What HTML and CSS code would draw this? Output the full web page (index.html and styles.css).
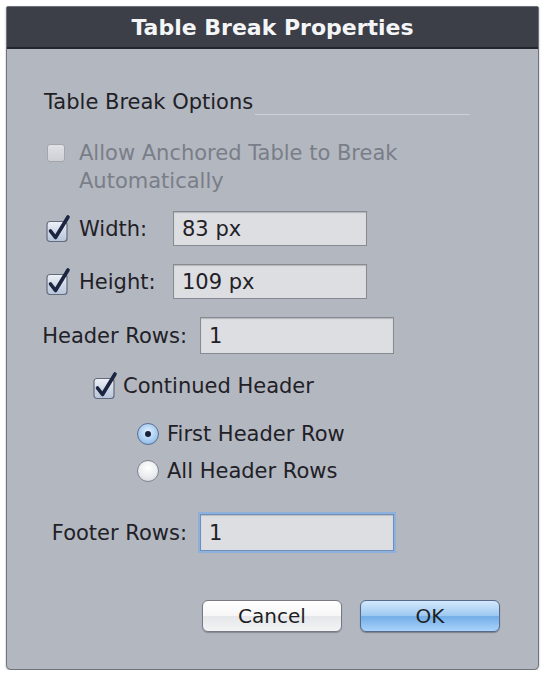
FILE: index.html
```html
<!DOCTYPE html>
<html>
<head>
<meta charset="utf-8">
<link rel="stylesheet" href="styles.css">
</head>
<body>
<div class="dialog">
  <div class="titlebar">Table Break Properties</div>
  <div class="content">
    <div class="row heading">
      <span>Table Break Options</span>
      <span class="rule"></span>
    </div>

    <div class="row allow">
      <span class="box disabled"></span>
      <span class="allow-text">Allow Anchored Table to Break<br>Automatically</span>
    </div>

    <div class="row dim">
      <svg class="check" width="26" height="28" viewBox="0 0 26 28">
        <defs>
          <linearGradient id="cb" x1="0" y1="0" x2="0" y2="1">
            <stop offset="0" stop-color="#eef1f7"/>
            <stop offset="1" stop-color="#b6c3d9"/>
          </linearGradient>
        </defs>
        <rect x="1" y="6.5" width="20" height="20" rx="3" fill="url(#cb)" stroke="#636a7a" stroke-width="1.2"/>
        <path d="M4.5 16 L9.5 22.5 L22 2" fill="none" stroke="#1b2440" stroke-width="3.6" stroke-linecap="round" stroke-linejoin="round"/>
      </svg>
      <span class="dim-label">Width:</span>
      <span class="field dim-field">83 px</span>
    </div>

    <div class="row dim second">
      <svg class="check" width="26" height="28" viewBox="0 0 26 28">
        <rect x="1" y="6.5" width="20" height="20" rx="3" fill="url(#cb)" stroke="#636a7a" stroke-width="1.2"/>
        <path d="M4.5 16 L9.5 22.5 L22 2" fill="none" stroke="#1b2440" stroke-width="3.6" stroke-linecap="round" stroke-linejoin="round"/>
      </svg>
      <span class="dim-label">Height:</span>
      <span class="field dim-field">109 px</span>
    </div>

    <div class="row labeled header-rows">
      <span class="rlabel">Header Rows:</span>
      <span class="field wide">1</span>
    </div>

    <div class="row continued">
      <svg class="check" width="26" height="28" viewBox="0 0 26 28">
        <rect x="1" y="6.5" width="20" height="20" rx="3" fill="url(#cb)" stroke="#636a7a" stroke-width="1.2"/>
        <path d="M4.5 16 L9.5 22.5 L22 2" fill="none" stroke="#1b2440" stroke-width="3.6" stroke-linecap="round" stroke-linejoin="round"/>
      </svg>
      <span>Continued Header</span>
    </div>

    <div class="row radio first">
      <span class="dot on"></span>
      <span>First Header Row</span>
    </div>
    <div class="row radio all">
      <span class="dot"></span>
      <span>All Header Rows</span>
    </div>

    <div class="row labeled footer-rows">
      <span class="rlabel">Footer Rows:</span>
      <span class="field wide focus">1</span>
    </div>

    <div class="row buttons">
      <span class="btn cancel">Cancel</span>
      <span class="btn ok">OK</span>
    </div>
  </div>
</div>
</body>
</html>
```
FILE: styles.css
```css
html, body {
  margin: 0;
  padding: 0;
  background: #ffffff;
}
body {
  font-family: "DejaVu Sans", "Liberation Sans", sans-serif;
  font-size: 21px;
  color: #1f2127;
}
.dialog {
  margin: 6px 0 0 6px;
  width: 533px;
  height: 664px;
  box-sizing: border-box;
  background: #b3b7c0;
  border: 1px solid #6f737b;
  border-radius: 2px 2px 5px 5px;
  box-shadow: 0 1px 2px rgba(0,0,0,0.35);
  display: flex;
  flex-direction: column;
}
.titlebar {
  height: 40px;
  background: #3c3f48;
  border-bottom: 2px solid #24262c;
  color: #f4f5f7;
  font-weight: bold;
  font-size: 22px;
  display: flex;
  align-items: center;
  justify-content: center;
  flex-shrink: 0;
}
.content {
  display: flex;
  flex-direction: column;
}
.row {
  display: flex;
  align-items: center;
}
.heading {
  margin-top: 39px;
  height: 28px;
  margin-left: 37px;
  margin-right: 68px;
}
.rule {
  flex: 1;
  height: 1px;
  background: #cdd0d6;
  align-self: flex-end;
  margin-bottom: 1px;
  margin-left: 2px;
}
.allow {
  margin-top: 23px;
  margin-left: 40px;
  align-items: flex-start;
  color: #7a7e88;
}
.allow-text {
  line-height: 28px;
  margin-left: 14px;
}
.box.disabled {
  width: 18px;
  height: 18px;
  box-sizing: border-box;
  margin-top: 5px;
  border: 1px solid #a3a6ad;
  border-radius: 3px;
  background: linear-gradient(#e0e1e5, #cdcfd5);
}
.check {
  overflow: visible;
  flex-shrink: 0;
}
.dim {
  margin-top: 16px;
  margin-left: 39px;
  height: 35px;
}
.dim.second {
  margin-top: 18px;
}
.dim-label {
  margin-left: 7px;
  width: 94px;
}
.field {
  box-sizing: border-box;
  height: 35px;
  background: #dddee2;
  border: 1px solid #878a91;
  box-shadow: inset 0 1px 1px rgba(0,0,0,0.18);
  display: flex;
  align-items: center;
  padding-left: 8px;
}
.dim-field {
  width: 194px;
}
.labeled {
  height: 37px;
}
.rlabel {
  width: 180px;
  text-align: right;
  margin-right: 13px;
}
.field.wide {
  width: 194px;
  height: 37px;
}
.header-rows {
  margin-top: 18px;
}
.continued {
  margin-top: 18px;
  height: 28px;
  margin-left: 86px;
}
.continued span {
  margin-left: 4px;
}
.radio {
  height: 28px;
  margin-left: 130px;
}
.radio span:last-child {
  margin-left: 8px;
}
.first {
  margin-top: 20px;
}
.all {
  margin-top: 9px;
}
.dot {
  width: 22px;
  height: 22px;
  box-sizing: border-box;
  border-radius: 50%;
  border: 1px solid #80848c;
  background: radial-gradient(circle at 50% 35%, #ffffff 0%, #eceef1 50%, #d4d6db 100%);
  position: relative;
  flex-shrink: 0;
}
.dot.on {
  border-color: #5a6f93;
  background: radial-gradient(circle at 50% 40%, #e6f2ff 0%, #a9cdf0 55%, #7aa8d8 100%);
}
.dot.on::after {
  content: "";
  position: absolute;
  left: 7px;
  top: 7px;
  width: 6px;
  height: 6px;
  border-radius: 50%;
  background: #17213a;
}
.footer-rows {
  margin-top: 29px;
}
.field.focus {
  border-color: #6f8fb8;
  box-shadow: 0 0 0 2px #8eb0dc, inset 0 1px 1px rgba(0,0,0,0.15);
}
.buttons {
  margin-top: 49px;
  justify-content: flex-end;
  margin-right: 38px;
  gap: 18px;
}
.btn {
  box-sizing: border-box;
  width: 140px;
  height: 32px;
  border-radius: 6px;
  display: flex;
  align-items: center;
  justify-content: center;
  font-size: 20px;
  color: #1d1f25;
}
.cancel {
  border: 1px solid #777a82;
  background: linear-gradient(#ffffff 0%, #f6f6f7 50%, #e6e7ea 51%, #f2f3f5 100%);
  box-shadow: 0 1px 1px rgba(0,0,0,0.25);
}
.ok {
  border: 1px solid #566a8e;
  background: linear-gradient(#d4e8fb 0%, #9fcaf2 48%, #73aee8 52%, #a9d3fa 100%);
  box-shadow: 0 1px 1px rgba(0,0,0,0.3);
}
```
